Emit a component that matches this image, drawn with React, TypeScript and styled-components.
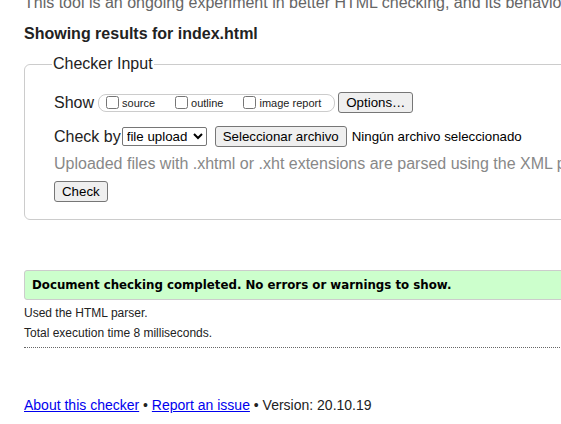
import React from "react"
import styled, { createGlobalStyle } from "styled-components"

const GlobalStyle = createGlobalStyle`
  html, body {
    margin: 0;
    padding: 0;
    background: #fff;
    overflow: hidden;
  }
  body {
    font-family: "Liberation Sans", Arial, sans-serif;
    color: #222;
  }
`

const Page = styled.div`
  width: 760px;
  padding: 0 0 0 24px;
`

const Intro = styled.p`
  margin: -6px 0 0;
  font-size: 16px;
  line-height: 18px;
  color: #666;
  white-space: nowrap;
`

const Heading = styled.h2`
  margin: 13px 0 0;
  font-size: 16px;
  line-height: 18px;
  font-weight: bold;
  color: #222;
`

const Fieldset = styled.fieldset`
  margin: 12px 0 0;
  padding: 10px 28px 17px 29px;
  border: 1px solid #ccc;
  border-radius: 6px;
  width: 620px;
`

const Legend = styled.legend`
  font-size: 16px;
  line-height: 18px;
  padding: 0 1px;
  margin-left: -2px;
  color: #222;
`

const Row = styled.div`
  display: flex;
  align-items: center;
  font-size: 16px;
  line-height: 20px;
  white-space: nowrap;
`

const ShowRow = styled(Row)`
  margin-top: 9px;
`

const CheckRow = styled(Row)`
  margin-top: 13px;
`

const Label = styled.span<{ $mr?: number }>`
  color: #222;
  margin-right: ${(p) => p.$mr ?? 4}px;
`

const Pill = styled.span`
  display: inline-flex;
  align-items: center;
  border: 1px solid #ccc;
  border-radius: 8px;
  height: 16px;
  padding: 0 13px 0 3px;
`

const Option = styled.label<{ $gap?: number }>`
  display: inline-flex;
  align-items: center;
  font-size: 11px;
  line-height: 14px;
  color: #222;
  margin-right: ${(p) => p.$gap ?? 0}px;
`

const Box = styled.input`
  width: 13px;
  height: 13px;
  margin: 0 3px 0 4px;
`

const Button = styled.button<{ $ml?: number }>`
  font-family: "Liberation Sans", Arial, sans-serif;
  font-size: 13.3px;
  height: 21px;
  padding: 1px 7px;
  margin-left: ${(p) => p.$ml ?? 0}px;
  border: 1px solid #767676;
  border-radius: 3px;
  background: #efefef;
  color: #000;
`

const Select = styled.select`
  font-family: "Liberation Sans", Arial, sans-serif;
  font-size: 13.3px;
  height: 19px;
  width: 85px;
  margin-left: 1px;
  border: 1px solid #767676;
  border-radius: 2px;
  background: #fff;
  color: #000;
  padding: 0;
`

const FileName = styled.span`
  font-size: 13.3px;
  margin-left: 5px;
  color: #000;
`

const Note = styled.p`
  margin: 7px 0 0;
  font-size: 16px;
  line-height: 20px;
  color: #888;
  white-space: nowrap;
`

const CheckButton = styled(Button)`
  margin-top: 7px;
`

const Success = styled.div`
  margin-top: 50px;
  width: 640px;
  height: 30px;
  box-sizing: border-box;
  background: #ccffcc;
  border: 1px solid #ccc;
  border-radius: 3px;
  padding: 0 7px;
  display: flex;
  align-items: center;
  font-family: "DejaVu Sans", Verdana, sans-serif;
  font-weight: bold;
  font-size: 11.8px;
  color: #000;
`

const Detail = styled.p<{ $mt: number }>`
  margin: ${(p) => p.$mt}px 0 0;
  font-size: 12px;
  line-height: 14px;
  color: #222;
`

const Dotted = styled.hr`
  margin: 7px 0 0;
  border: 0;
  border-top: 1px dotted #666;
  width: 700px;
`

const Footer = styled.p`
  margin: 49px 0 0;
  font-size: 14px;
  line-height: 16px;
  color: #222;
`

const Link = styled.a`
  color: #0000ee;
  text-decoration: underline;
`

export default function App() {
  return (
    <>
      <GlobalStyle />
      <Page>
        <Intro>
          This tool is an ongoing experiment in better HTML checking, and its behavior remains subject to change
        </Intro>
        <Heading>Showing results for index.html</Heading>
        <Fieldset>
          <Legend>Checker Input</Legend>
          <ShowRow>
            <Label>Show</Label>
            <Pill>
              <Option $gap={16}>
                <Box type="checkbox" />source
              </Option>
              <Option $gap={16}>
                <Box type="checkbox" />outline
              </Option>
              <Option>
                <Box type="checkbox" />image report
              </Option>
            </Pill>
            <Button $ml={3}>Options…</Button>
          </ShowRow>
          <CheckRow>
            <Label $mr={0}>Check by</Label>
            <Select defaultValue="file">
              <option value="address">address</option>
              <option value="file">file upload</option>
              <option value="text">text input</option>
            </Select>
            <Button $ml={8}>Seleccionar archivo</Button>
            <FileName>Ningún archivo seleccionado</FileName>
          </CheckRow>
          <Note>Uploaded files with .xhtml or .xht extensions are parsed using the XML parser.</Note>
          <CheckButton>Check</CheckButton>
        </Fieldset>
        <Success>Document checking completed. No errors or warnings to show.</Success>
        <Detail $mt={6}>Used the HTML parser.</Detail>
        <Detail $mt={6}>Total execution time 8 milliseconds.</Detail>
        <Dotted />
        <Footer>
          <Link href="#">About this checker</Link> • <Link href="#">Report an issue</Link> • Version: 20.10.19
        </Footer>
      </Page>
    </>
  )
}
